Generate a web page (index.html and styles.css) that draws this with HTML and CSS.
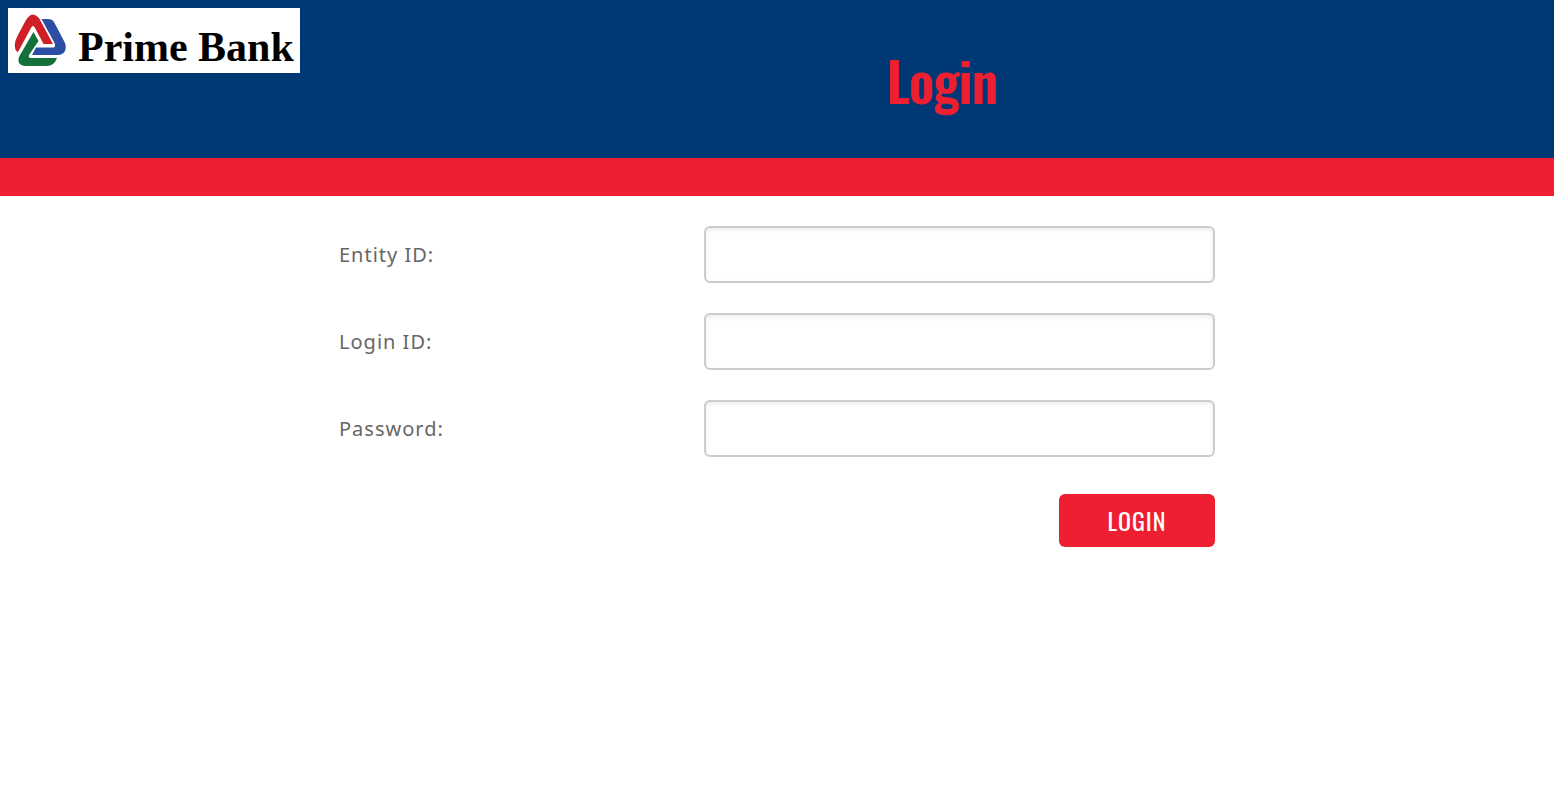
FILE: index.html
```html
<!DOCTYPE html>
<html lang="en">
<head>
  <meta charset="utf-8">
  <meta name="viewport" content="width=device-width, initial-scale=1">
  <title>Prime Bank Login</title>
  <link rel="stylesheet" href="styles.css">
</head>
<body>
  <header class="header">
    <div class="logo">
      <svg class="logo-mark" viewBox="0 0 56 56" aria-hidden="true">
        <path fill="#cf2027" d="M1 34C0 29 3 24 5 20L12 7Q18-3 25 5L39 31H29.500L21 15Q19 11 17 15L4 39Q1 38 1 34Z"/>
        <path fill="#2b4da3" d="M27.500 6H34Q38 6 40 9L50 28C54 35 51 42 44 42H18L22 34.500H39.500Q42 34 40.500 30Z"/>
        <path fill="#14713a" d="M19.500 19L24.500 28L15 42Q14 45 17 45H43Q40 53 33 53H12C4 53 3 47 6 42Z"/>
      </svg>
      <span class="logo-name">Prime Bank</span>
    </div>
    <h1 class="title">Login</h1>
  </header>
  <div class="stripe"></div>
  <main class="main">
    <form class="form">
      <div class="row">
        <label class="label" for="entity">Entity ID:</label>
        <input class="field" id="entity" name="entity" type="text">
      </div>
      <div class="row">
        <label class="label" for="login">Login ID:</label>
        <input class="field" id="login" name="login" type="text">
      </div>
      <div class="row">
        <label class="label" for="password">Password:</label>
        <input class="field" id="password" name="password" type="password">
      </div>
      <button class="submit" type="submit">LOGIN</button>
    </form>
  </main>
</body>
</html>
```

FILE: styles.css
```css
* {
  box-sizing: border-box;
}

body {
  margin: 0;
  background: #fff;
  color: #666;
  font-family: "Noto Sans", Verdana, sans-serif;
}

.header {
  display: flex;
  align-items: flex-start;
  gap: 30px;
  padding: 8px 0 0 8px;
  min-height: 158px;
  background: #003876;
}

.logo {
  display: flex;
  align-items: center;
  gap: 8px;
  flex: none;
  width: 292px;
  height: 65px;
  padding-left: 6px;
  background: #fff;
}

.logo-mark {
  flex: none;
  width: 56px;
  height: 56px;
}

.logo-name {
  padding-top: 12px;
  color: #000;
  font: bold 42px/48px "Liberation Serif", serif;
  white-space: nowrap;
}

.title {
  flex: 1;
  margin: 0;
  padding-top: 40px;
  color: #ee1f30;
  font: 600 54px/64px Oswald, "Liberation Sans Narrow", sans-serif;
  letter-spacing: -1px;
  text-align: center;
}

.stripe {
  height: 38px;
  background: #ee1f30;
}

.main {
  padding: 30px 16px;
}

.form {
  display: flex;
  flex-direction: column;
  gap: 30px;
  max-width: 876px;
  margin: 0 auto;
}

.row {
  display: grid;
  grid-template-columns: 5fr 7fr;
  align-items: center;
}

.label {
  font-size: 20px;
  line-height: 28px;
  letter-spacing: 1px;
}

.field {
  width: 100%;
  height: 57px;
  padding: 10px 14px;
  border: 2px solid #ccc;
  border-radius: 6px;
  background: #fff;
  box-shadow: inset 0 2px 4px rgba(0, 0, 0, 0.08);
  color: #666;
  font: 20px/28px "Noto Sans", Verdana, sans-serif;
}

.submit {
  align-self: flex-end;
  width: 156px;
  height: 53px;
  margin-top: 7px;
  padding: 0 0 2px;
  border: 0;
  border-radius: 6px;
  background: #ee1f30;
  color: #fff;
  font: 24px/32px Oswald, "Liberation Sans Narrow", sans-serif;
  letter-spacing: 1px;
  cursor: pointer;
}
```
